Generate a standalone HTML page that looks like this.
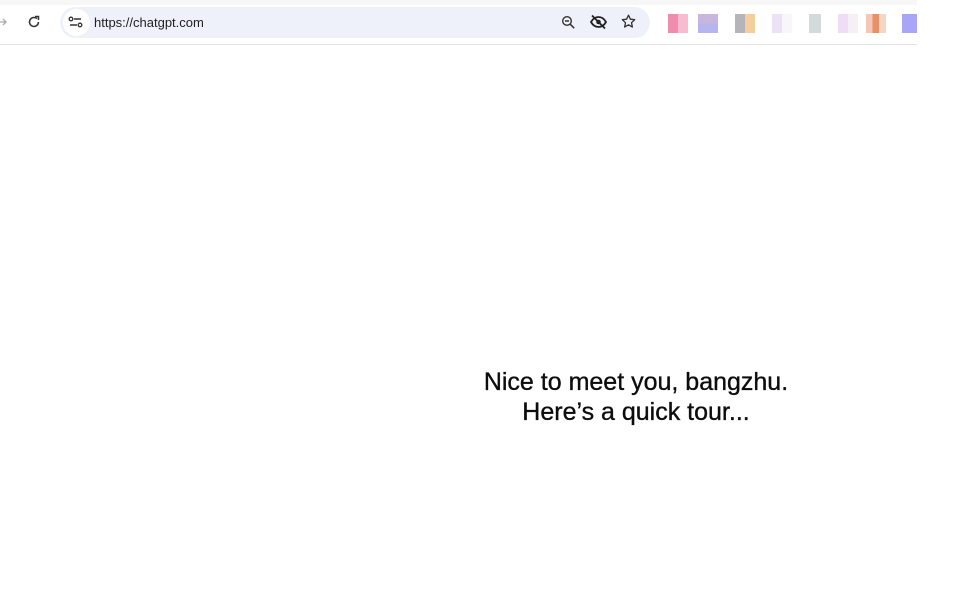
<!DOCTYPE html>
<html><head><style>
html,body{margin:0;padding:0;width:958px;height:610px;background:#fff;overflow:hidden;font-family:"Liberation Sans",sans-serif;}
.top{position:absolute;left:0;top:0;width:917px;height:5px;background:#f7f7f8;}
.bar{position:absolute;left:0;top:5px;width:917px;height:39px;background:#fff;border-bottom:1px solid #e3e3e6;}
.pill{position:absolute;left:60px;top:7px;width:590px;height:31px;border-radius:16px;background:#eef1fa;}
.tune{position:absolute;left:63px;top:9px;width:27px;height:27px;border-radius:50%;background:#fff;}
.url{position:absolute;left:94px;top:15px;font-size:13px;color:#202124;}
.sq{position:absolute;top:14px;width:20px;height:19px;}
.msg{position:absolute;left:436px;top:367px;width:400px;text-align:center;font-size:25px;line-height:30px;color:#0d0d0d;letter-spacing:0;-webkit-text-stroke:0.35px #0d0d0d;}
</style></head><body>
<div class="top"></div>
<div class="bar"></div>
<div class="pill"></div>
<div class="tune"></div>
<svg style="position:absolute;left:0;top:15px" width="8" height="14"><path d="M0 7h6M3 4l3 3-3 3" stroke="#aaa" stroke-width="1.3" fill="none"/></svg>
<svg style="position:absolute;left:27px;top:15px" width="14" height="14" viewBox="0 0 14 14"><path d="M11.5 7A4.5 4.5 0 1 1 10 3.6" stroke="#333" stroke-width="1.5" fill="none"/><path d="M8 1.5h3.5v3.5" stroke="#333" stroke-width="1.5" fill="none"/></svg>
<svg style="position:absolute;left:68px;top:15px" width="16" height="14" viewBox="0 0 16 14"><circle cx="3" cy="4" r="1.8" stroke="#333" stroke-width="1.3" fill="none"/><path d="M6 4h7M2 10h7" stroke="#333" stroke-width="1.5"/><circle cx="12" cy="10" r="1.8" stroke="#333" stroke-width="1.3" fill="none"/></svg>
<div class="url">https://chatgpt.com</div>
<svg style="position:absolute;left:561px;top:15px" width="15" height="15" viewBox="0 0 15 15"><circle cx="6" cy="6" r="4.3" stroke="#333" stroke-width="1.4" fill="none"/><path d="M9.2 9.2l4 4M4 6h4" stroke="#333" stroke-width="1.5"/></svg>
<svg style="position:absolute;left:589px;top:14px" width="19" height="16" viewBox="0 0 19 16"><path d="M2 8c2-3.5 4.5-5 7.5-5s5.5 1.5 7.5 5c-2 3.5-4.5 5-7.5 5S4 11.5 2 8z" stroke="#222" stroke-width="1.8" fill="none"/><circle cx="9.5" cy="8" r="2.3" fill="#222"/><path d="M3 1.5l13 13" stroke="#222" stroke-width="1.8"/></svg>
<svg style="position:absolute;left:621px;top:14px" width="15" height="15" viewBox="0 0 15 15"><path d="M7.5 1.2l1.9 4 4.3.5-3.2 3 .9 4.3-3.9-2.2-3.9 2.2.9-4.3-3.2-3 4.3-.5z" stroke="#333" stroke-width="1.3" fill="none" stroke-linejoin="round"/></svg>
<div class="sq" style="left:668px;background:linear-gradient(90deg,#f08cae 50%,#f7bcd0 50%)"></div>
<div class="sq" style="left:698px;background:linear-gradient(180deg,#c9b6de 50%,#b8b4ee 50%)"></div>
<div class="sq" style="left:735px;background:linear-gradient(90deg,#b4b4b9 50%,#f5ce9c 50%)"></div>
<div class="sq" style="left:772px;background:linear-gradient(90deg,#ece2f5 50%,#f8f6fb 50%)"></div>
<div class="sq" style="left:801px;background:linear-gradient(90deg,#fff 40%,#d4d9dc 40%)"></div>
<div class="sq" style="left:838px;background:linear-gradient(90deg,#efdcf6 50%,#f8eef6 50%)"></div>
<div class="sq" style="left:866px;background:linear-gradient(90deg,#f6c7b6 33%,#e89066 33%,#e89066 66%,#f4d6c6 66%)"></div>
<div class="sq" style="left:902px;width:15px;background:#a9a6f5"></div>
<div class="msg">Nice to meet you, bangzhu.<br>Here’s a quick tour...</div>
</body></html>
